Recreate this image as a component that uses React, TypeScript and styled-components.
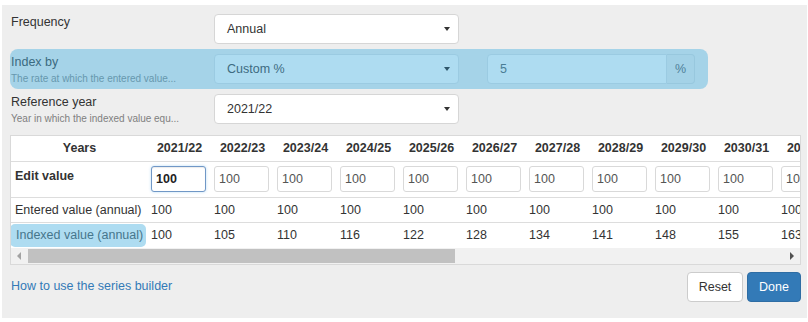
import React from "react";
import styled, { createGlobalStyle } from "styled-components";

const Global = createGlobalStyle`
  html, body { margin: 0; padding: 0; background: #ffffff; }
  body { font-family: "Liberation Sans", Arial, Helvetica, sans-serif; font-size: 12.5px; color: #333333; }
  * { box-sizing: border-box; }
`;

const Panel = styled.div`
  margin: 5px 1px 0 2px;
  height: 313px;
  background: #eeeeee;
  padding: 4px 6px 0 8px;
`;

const FormRow = styled.div<{ $highlight?: boolean }>`
  display: flex;
  align-items: flex-start;
  width: 698px;
  height: 40px;
  padding: 5px 0 5px 1px;
  border-radius: 8px;
  background: ${(p) => (p.$highlight ? "#a5d3e8" : "transparent")};
`;

const LabelBlock = styled.div`
  width: 203px;
  flex: none;
  display: flex;
  flex-direction: column;
`;

const LabelTitle = styled.div<{ $highlight?: boolean }>`
  font-size: 12.5px;
  line-height: 16px;
  color: ${(p) => (p.$highlight ? "#3b6a80" : "#333333")};
`;

const LabelHint = styled.div<{ $highlight?: boolean }>`
  font-size: 10px;
  line-height: 13px;
  margin-top: 2px;
  color: ${(p) => (p.$highlight ? "#6798ae" : "#808080")};
  white-space: nowrap;
`;

const SelectBox = styled.div<{ $highlight?: boolean }>`
  width: 245px;
  height: 30px;
  flex: none;
  display: flex;
  align-items: center;
  justify-content: space-between;
  padding: 0 8px 0 12px;
  border-radius: 4px;
  border: 1px solid ${(p) => (p.$highlight ? "#9bcbe2" : "#d6d6d6")};
  background: ${(p) => (p.$highlight ? "#aedcf1" : "#ffffff")};
  color: ${(p) => (p.$highlight ? "#3d6b81" : "#333333")};
  font-size: 12.5px;
`;

const Caret = styled.span<{ $highlight?: boolean }>`
  width: 0;
  height: 0;
  border-left: 3px solid transparent;
  border-right: 3px solid transparent;
  border-top: 4px solid ${(p) => (p.$highlight ? "#2f566a" : "#333333")};
`;

const InputGroup = styled.div`
  display: flex;
  margin-left: 28px;
  height: 30px;
`;

const RateInput = styled.div`
  width: 180px;
  height: 30px;
  display: flex;
  align-items: center;
  padding-left: 12px;
  background: #aedcf1;
  border: 1px solid #9bcbe2;
  border-radius: 4px 0 0 4px;
  color: #4a7d95;
  font-size: 12.5px;
`;

const Addon = styled.div`
  width: 28px;
  height: 30px;
  display: flex;
  align-items: center;
  justify-content: center;
  background: #a4d2e7;
  border: 1px solid #98c8de;
  border-left: none;
  border-radius: 0 4px 4px 0;
  color: #4f8199;
  font-size: 12.5px;
`;

const TableWrap = styled.div`
  margin-top: 6px;
  width: 791px;
  border: 1px solid #d9d9d9;
  background: #ffffff;
  overflow: hidden;
`;

const Table = styled.table`
  border-collapse: collapse;
  table-layout: fixed;
  width: ${137 + 63 * 12}px;
`;

const Th = styled.th<{ $first?: boolean }>`
  width: ${(p) => (p.$first ? 137 : 63)}px;
  height: 25px;
  padding: 0;
  text-align: center;
  font-weight: bold;
  font-size: 12.5px;
  color: #333333;
  border-bottom: 1px solid #dddddd;
  white-space: nowrap;
  overflow: hidden;
`;

const Tr = styled.tr<{ $h: number }>`
  height: ${(p) => p.$h}px;
  border-bottom: 1px solid #dddddd;
  &:last-child { border-bottom: none; }
`;

const RowLabel = styled.td<{ $bold?: boolean }>`
  padding: ${(p) => (p.$bold ? "6px 0 0 4px" : "0 0 0 4px")};
  vertical-align: ${(p) => (p.$bold ? "top" : "middle")};
  font-weight: ${(p) => (p.$bold ? "bold" : "normal")};
  white-space: nowrap;
  line-height: 16px;
`;

const HighlightLabel = styled.span`
  display: block;
  margin-left: -5px;
  width: 136px;
  height: 23px;
  line-height: 23px;
  padding-left: 6px;
  border-radius: 5px;
  background: #aedcf1;
  color: #46768c;
`;

const Td = styled.td`
  padding: 0 0 0 3px;
  vertical-align: middle;
  white-space: nowrap;
  overflow: hidden;
`;

const CellInput = styled.div<{ $focused?: boolean }>`
  width: 55px;
  height: 26px;
  display: flex;
  align-items: center;
  padding-left: 4px;
  border-radius: 3px;
  border: 1px solid ${(p) => (p.$focused ? "#7097c6" : "#d9d9d9")};
  box-shadow: ${(p) => (p.$focused ? "inset 0 1px 1px rgba(0,0,0,.08), 0 0 3px rgba(102,175,233,.45)" : "none")};
  color: ${(p) => (p.$focused ? "#222222" : "#555555")};
  font-weight: ${(p) => (p.$focused ? "bold" : "normal")};
  background: #ffffff;
  overflow: hidden;
`;

const ScrollBar = styled.div`
  height: 16px;
  background: #f1f1f1;
  display: flex;
  align-items: center;
`;

const ScrollArrow = styled.div`
  width: 16px;
  height: 16px;
  flex: none;
  display: flex;
  align-items: center;
  justify-content: center;
`;

const ArrowLeft = styled.span`
  width: 0;
  height: 0;
  border-top: 4px solid transparent;
  border-bottom: 4px solid transparent;
  border-right: 4px solid #a3a3a3;
`;

const ArrowRight = styled.span`
  width: 0;
  height: 0;
  border-top: 4px solid transparent;
  border-bottom: 4px solid transparent;
  border-left: 4px solid #505050;
`;

const Track = styled.div`
  flex: 1;
  height: 16px;
  display: flex;
  align-items: center;
`;

const Thumb = styled.div`
  width: 427px;
  height: 14px;
  margin-left: 1px;
  background: #c1c1c1;
`;

const Footer = styled.div`
  display: flex;
  align-items: center;
  justify-content: space-between;
  margin-top: 7px;
  width: 791px;
  padding-left: 1px;
`;

const HelpLink = styled.a`
  color: #337ab7;
  text-decoration: none;
  font-size: 12.5px;
  margin-top: -3px;
`;

const Buttons = styled.div`
  display: flex;
  gap: 4px;
`;

const Button = styled.button<{ $primary?: boolean }>`
  height: 30px;
  width: ${(p) => (p.$primary ? 54 : 56)}px;
  padding: 0;
  border-radius: 4px;
  font-family: inherit;
  font-size: 12.5px;
  border: 1px solid ${(p) => (p.$primary ? "#2e6da4" : "#cccccc")};
  background: ${(p) => (p.$primary ? "#337ab7" : "#ffffff")};
  color: ${(p) => (p.$primary ? "#ffffff" : "#333333")};
`;

const years = Array.from({ length: 12 }, (_, i) => {
  const a = 2021 + i;
  return `${a}/${String((a + 1) % 100).padStart(2, "0")}`;
});

export default function App() {
  return (
    <>
      <Global />
      <Panel>
        <FormRow>
          <LabelBlock>
            <LabelTitle>Frequency</LabelTitle>
          </LabelBlock>
          <SelectBox>
            Annual
            <Caret />
          </SelectBox>
        </FormRow>
        <FormRow $highlight>
          <LabelBlock>
            <LabelTitle $highlight>Index by</LabelTitle>
            <LabelHint $highlight>The rate at which the entered value...</LabelHint>
          </LabelBlock>
          <SelectBox $highlight>
            Custom %
            <Caret $highlight />
          </SelectBox>
          <InputGroup>
            <RateInput>5</RateInput>
            <Addon>%</Addon>
          </InputGroup>
        </FormRow>
        <FormRow>
          <LabelBlock>
            <LabelTitle>Reference year</LabelTitle>
            <LabelHint>Year in which the indexed value equ...</LabelHint>
          </LabelBlock>
          <SelectBox>
            2021/22
            <Caret />
          </SelectBox>
        </FormRow>

        <TableWrap>
          <Table>
            <thead>
              <tr>
                <Th $first>Years</Th>
                {years.map((y) => (
                  <Th key={y}>{y}</Th>
                ))}
              </tr>
            </thead>
            <tbody>
              <Tr $h={36}>
                <RowLabel $bold>Edit value</RowLabel>
                {years.map((y, i) => (
                  <Td key={y}>
                    <CellInput $focused={i === 0}>100</CellInput>
                  </Td>
                ))}
              </Tr>
              <Tr $h={25}>
                <RowLabel>Entered value (annual)</RowLabel>
                {years.map((y) => (
                  <Td key={y}>100</Td>
                ))}
              </Tr>
              <Tr $h={26}>
                <RowLabel>
                  <HighlightLabel>Indexed value (annual)</HighlightLabel>
                </RowLabel>
                {years.map((y, i) => (
                  <Td key={y}>{Math.round(100 * Math.pow(1.05, i))}</Td>
                ))}
              </Tr>
            </tbody>
          </Table>
          <ScrollBar>
            <ScrollArrow>
              <ArrowLeft />
            </ScrollArrow>
            <Track>
              <Thumb />
            </Track>
            <ScrollArrow>
              <ArrowRight />
            </ScrollArrow>
          </ScrollBar>
        </TableWrap>

        <Footer>
          <HelpLink href="#">How to use the series builder</HelpLink>
          <Buttons>
            <Button>Reset</Button>
            <Button $primary>Done</Button>
          </Buttons>
        </Footer>
      </Panel>
    </>
  );
}
